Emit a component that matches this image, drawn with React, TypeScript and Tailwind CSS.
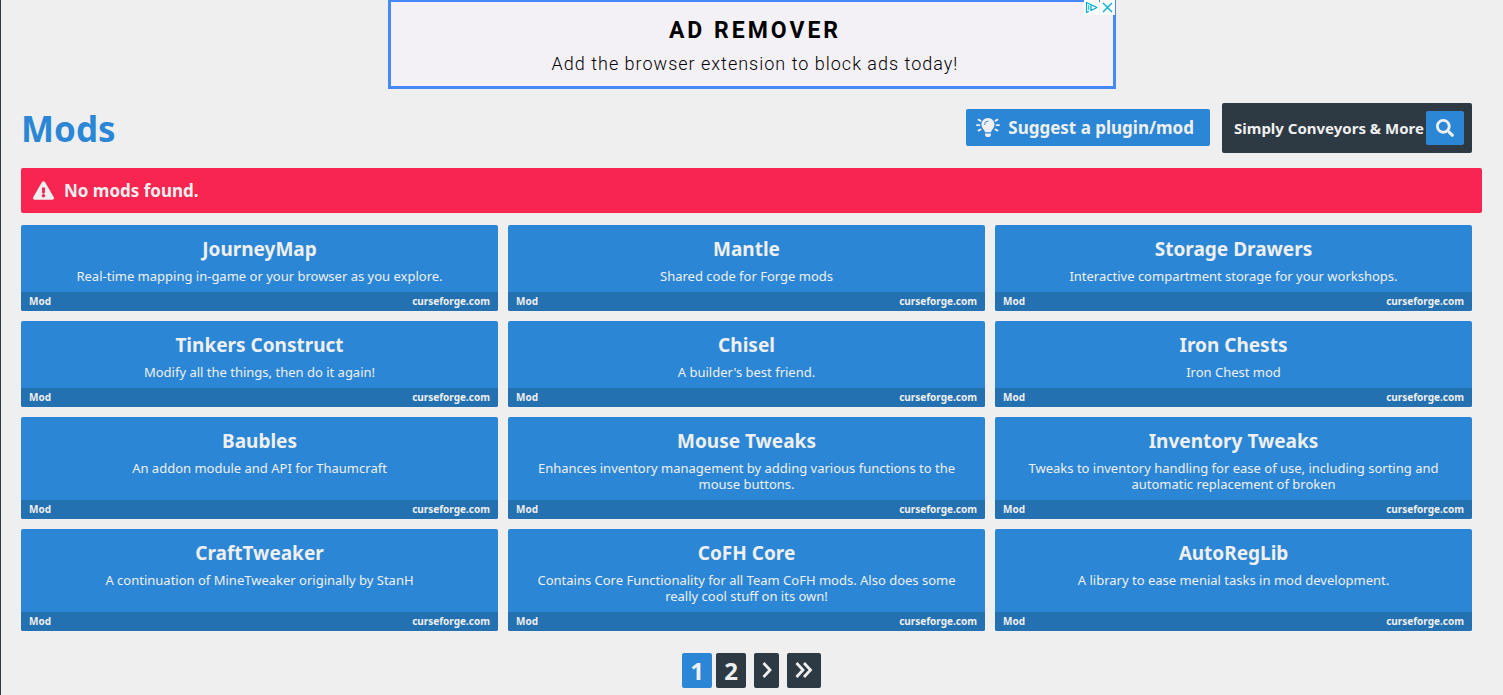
import React, { useState } from 'react';
import { FaExclamationTriangle, FaSearch } from 'react-icons/fa';

interface Mod {
  name: string;
  description: string;
}

const mods: Mod[] = [
  {
    name: 'JourneyMap',
    description: 'Real-time mapping in-game or your browser as you explore.',
  },
  { name: 'Mantle', description: 'Shared code for Forge mods' },
  {
    name: 'Storage Drawers',
    description: 'Interactive compartment storage for your workshops.',
  },
  {
    name: 'Tinkers Construct',
    description: 'Modify all the things, then do it again!',
  },
  { name: 'Chisel', description: "A builder's best friend." },
  { name: 'Iron Chests', description: 'Iron Chest mod' },
  { name: 'Baubles', description: 'An addon module and API for Thaumcraft' },
  {
    name: 'Mouse Tweaks',
    description:
      'Enhances inventory management by adding various functions to the mouse buttons.',
  },
  {
    name: 'Inventory Tweaks',
    description:
      'Tweaks to inventory handling for ease of use, including sorting and automatic replacement of broken',
  },
  {
    name: 'CraftTweaker',
    description: 'A continuation of MineTweaker originally by StanH',
  },
  {
    name: 'CoFH Core',
    description:
      'Contains Core Functionality for all Team CoFH mods. Also does some really cool stuff on its own!',
  },
  {
    name: 'AutoRegLib',
    description: 'A library to ease menial tasks in mod development.',
  },
];

const BulbIcon: React.FC = () => (
  <svg className="h-[19px] w-6" viewBox="0 0 640 512" fill="currentColor" aria-hidden="true">
    <path d="M320 0C218 0 144 83 144 176a175 175 0 0 0 44 116c16 19 42 58 52 91v1h160v-1c10-33 36-72 52-91A175 175 0 0 0 496 176C496 79 417 0 320 0Z" />
    <path
      className="stroke-[#2b87d5]"
      fill="none"
      strokeWidth="24"
      strokeLinecap="round"
      d="M224 176a96 96 0 0 1 96-96"
    />
    <path d="M240 416h160v38a36 36 0 0 1-5 18l-17 26c-5 8-17 14-27 14h-62c-9 0-21-6-26-14l-18-26a32 32 0 0 1-5-18Z" />
    <path
      fill="none"
      stroke="currentColor"
      strokeWidth="50"
      strokeLinecap="round"
      d="M24 192h64M552 192h64M64 44l55 32M576 44l-55 32M64 340l55-32M576 340l-55-32"
    />
  </svg>
);

const AdBanner: React.FC = () => (
  <a
    href="#"
    className="relative block w-full max-w-[728px] mx-auto h-[89px] pl-1.5 border-3 border-t-2 border-[#4688f7] bg-[#f4f1f6] text-center text-black font-[Roboto,sans-serif]"
  >
    <span className="block mt-[13px] text-[23px] leading-8 font-bold tracking-[3px]">
      AD REMOVER
    </span>
    <span className="block text-lg leading-[34px] font-light tracking-[1px]">
      Add the browser extension to block ads today!
    </span>
    <span className="absolute -top-0.5 -right-0.5 flex gap-px">
      <svg className="w-[15px] h-[15px] bg-white" viewBox="0 0 15 15" fill="none" stroke="#00aecd">
        <path
          strokeWidth="1.3"
          strokeLinejoin="round"
          d="M5 11.500l-2.500 1V2.500l10.500 5-6 3V5.500"
        />
        <path strokeWidth="1" d="M4.800 5v5" />
      </svg>
      <svg className="w-[15px] h-[15px] bg-white" viewBox="0 0 15 15" fill="none" stroke="#00aecd">
        <path strokeWidth="1.4" d="M3 3l9 9M12 3l-9 9" />
      </svg>
    </span>
  </a>
);

const ModCard: React.FC<{ mod: Mod }> = ({ mod }) => (
  <a
    href="#"
    className="flex flex-col rounded-xs overflow-hidden bg-[#2b87d5] text-center"
  >
    <div className="flex-1 px-4 pt-2.5 pb-2">
      <h2 className="text-[19px] leading-7 font-bold">{mod.name}</h2>
      <p className="mt-[5px] text-[13px] leading-4">{mod.description}</p>
    </div>
    <div className="flex justify-between px-2 bg-[#2471b2] text-[10px] leading-[19px] font-bold">
      <span>Mod</span>
      <span>curseforge.com</span>
    </div>
  </a>
);

const App: React.FC = () => {
  const [search, setSearch] = useState('Simply Conveyors & More');

  return (
    <div className="min-h-screen border-l border-[#2d3943] bg-[#efefef] text-[#efefef] font-['Noto_Sans',sans-serif]">
      <AdBanner />

      <main className="pl-5 pr-[21px] pb-[7px]">
        <div className="flex items-start mt-3.5 mr-2.5">
          <h1 className="flex-1 text-[35px] leading-[52px] -mb-0.5 font-bold text-[#2b87d5]">
            Mods
          </h1>
          <button className="flex items-center gap-2 h-[37px] mt-1.5 mr-3 pl-2.5 pr-4 rounded-xs bg-[#2b87d5] text-[17px] font-bold">
            <BulbIcon />
            Suggest a plugin/mod
          </button>
          <form
            className="flex items-center w-[250px] h-[50px] pl-3 pr-2 rounded-xs bg-[#2d3943]"
            onSubmit={(e) => e.preventDefault()}
          >
            <input
              type="text"
              aria-label="Search mods"
              value={search}
              onChange={(e) => setSearch(e.target.value)}
              className="flex-1 min-w-0 text-[15px] font-bold outline-none"
            />
            <button
              aria-label="Search"
              className="flex items-center justify-center w-[38px] h-[34px] rounded-xs bg-[#2b87d5] text-lg"
            >
              <FaSearch />
            </button>
          </form>
        </div>

        <div
          role="alert"
          className="flex items-center gap-2.5 h-[45px] mt-[15px] px-3 rounded-xs bg-[#f82550] text-[17px] font-bold"
        >
          <FaExclamationTriangle className="w-[21px] h-[19px]" />
          No mods found.
        </div>

        {/* Popular mods */}
        <div className="grid grid-cols-3 gap-2.5 mt-3 mr-2.5">
          {mods.map((mod) => (
            <ModCard key={mod.name} mod={mod} />
          ))}
        </div>

        {/* Pagination */}
        <nav
          aria-label="Pages"
          className="flex justify-center gap-2 mt-[22px] text-2xl leading-[35px] font-bold"
        >
          <div className="flex gap-1">
            <button aria-current="page" className="w-[30px] h-[35px] rounded-xs bg-[#2b87d5]">
              1
            </button>
            <button className="w-[30px] h-[35px] rounded-xs bg-[#2d3943]">2</button>
          </div>
          <button
            aria-label="Next page"
            className="flex items-center justify-center w-[25px] h-[35px] pb-0.5 rounded-xs bg-[#2d3943]"
          >
            <svg className="w-[10px] h-4" viewBox="0 0 10 16" fill="none" stroke="currentColor" strokeWidth="2.8">
              <path d="M1.500 1L8 8l-6.500 7" />
            </svg>
          </button>
          <button
            aria-label="Last page"
            className="flex items-center justify-center w-[34px] h-[35px] pb-0.5 rounded-xs bg-[#2d3943]"
          >
            <svg className="w-[18px] h-4" viewBox="0 0 18 16" fill="none" stroke="currentColor" strokeWidth="2.8">
              <path d="M1.500 1L8 8l-6.500 7M9 1l6.500 7L9 15" />
            </svg>
          </button>
        </nav>
      </main>
    </div>
  );
};

export default App;
